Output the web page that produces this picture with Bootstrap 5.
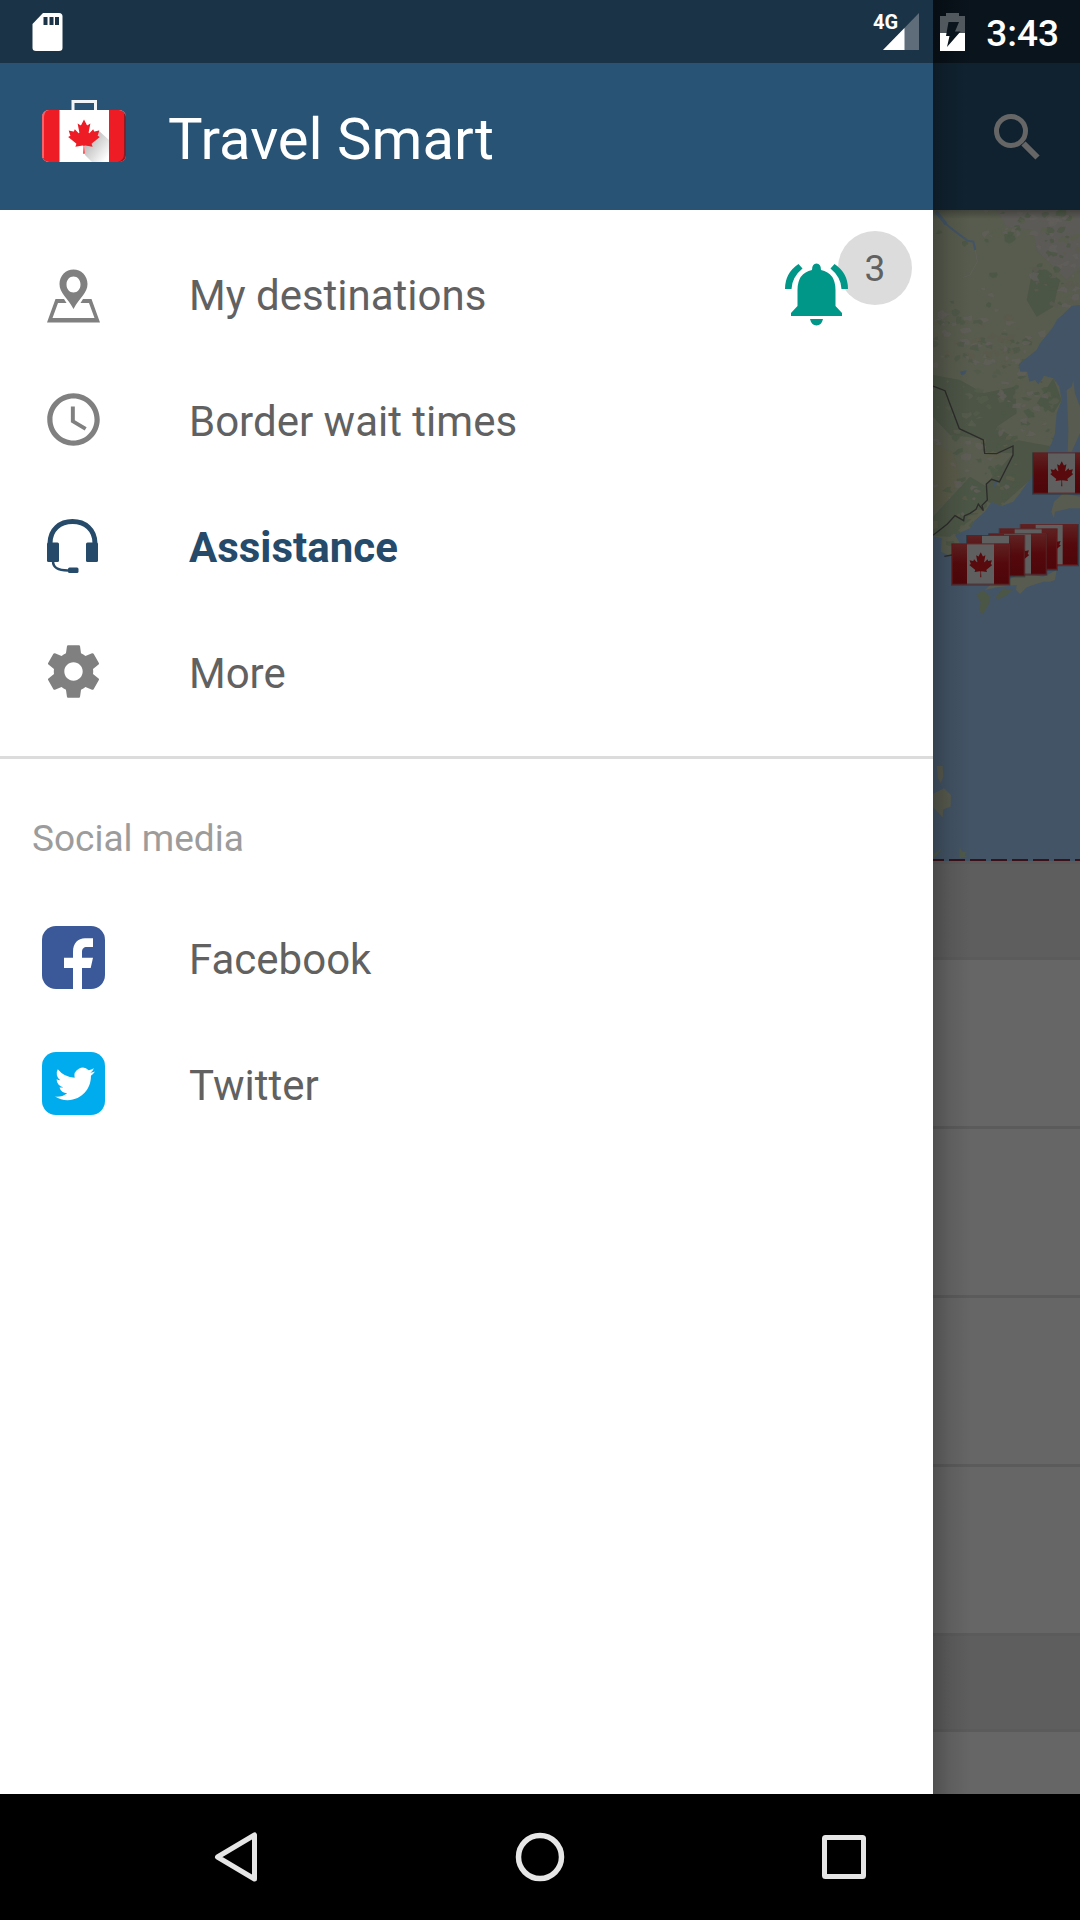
<!DOCTYPE html>
<html lang="en">
<head>
<meta charset="utf-8">
<meta name="viewport" content="width=device-width, initial-scale=1">
<title>Travel Smart</title>
<link href="https://cdn.jsdelivr.net/npm/bootstrap@5.3.0/dist/css/bootstrap.min.css" rel="stylesheet">
<style>
  :root { --peek: 147px; }
  body { font-family: Roboto, "Noto Sans", sans-serif; background: #666; }
  svg { display: block; flex: none; }
  .status-strip {
    height: 63px; padding: 0 21px 0 32px; color: #fff;
    background: linear-gradient(to right, #1a3346 calc(100% - var(--peek)), #070e14 calc(100% - var(--peek)), #0a141c calc(100% - 110px));
  }
  .status-set { gap: 21px; }
  .status-set svg { overflow: visible; }
  .net-type { font-size: 20px; font-weight: 700; }
  .clock-text { font-size: 37px; line-height: 44px; font-weight: 500; padding-top: 4px; }
  .app-top { height: 147px; background: #102230; padding-right: 39px; }
  .map-area { background: #435466; }
  .map-area::before { content: ""; position: absolute; top: 0; left: 0; right: 0; height: 9px; background: linear-gradient(rgba(0,0,0,.25), transparent); }
  .feed-head { height: 96px; background: #5e5e5e; border-bottom: 3px solid #5b5b5b; }
  .feed-head-first { height: 99px; border-top: 3px solid #5b5b5b; }
  .feed-item { height: 169px; background: #666; border-bottom: 3px solid #5b5b5b; }
  .feed-last { min-height: 62px; background: #666; }
  .drawer { width: calc(100% - var(--peek)); background: #fff; }
  .drawer::after { content: ""; position: absolute; top: 0; bottom: 0; left: 100%; width: 38px; background: linear-gradient(to right, rgba(0,0,0,.22), rgba(0,0,0,.08) 45%, transparent); pointer-events: none; }
  .drawer-top { height: 147px; background: #285375; padding: 0 42px; gap: 42px; }
  .drawer-top svg { margin-bottom: 11px; }
  .drawer-title { font-size: 58px; line-height: 68px; font-weight: 400; color: #fff; padding-top: 4px; }
  .drawer-menu { padding-top: 22px; padding-bottom: 20px; border-bottom: 3px solid #dcdcdc; }
  .drawer-row { height: 126px; padding: 0 21px 0 42px; gap: 84px; font-size: 42px; line-height: 50px; color: #616161; text-decoration: none; }
  .drawer-row > svg { margin-bottom: 4px; color: #808080; }
  .row-text { padding-top: 2px; }
  .drawer-row.chosen, .drawer-row.chosen > svg { color: #254a6a; }
  .drawer-row.chosen { font-weight: 700; }
  .alerts { height: 128px; }
  .alerts svg { position: relative; z-index: 1; margin-right: -11px; }
  .alert-count { width: 74px; height: 74px; background: #dcdcdc; font-size: 37px; line-height: 44px; padding-top: 2px; }
  .social-label { font-size: 37px; line-height: 48px; color: #9c9c9c; padding: 56px 32px 33px; font-weight: 400; }
  .nav-strip { height: 126px; background: #000; }
  .nav-key { width: 304px; height: 126px; background: none; border: 0; padding: 0; }
  .icon-key { background: none; border: 0; padding: 0; }
</style>
<script src="https://cdn.jsdelivr.net/npm/bootstrap@5.3.0/dist/js/bootstrap.bundle.min.js"></script>
</head>
<body class="d-flex flex-column min-vh-100">

<svg width="0" height="0" class="position-absolute" aria-hidden="true">
  <defs>
    <path id="leaf" d="m4890 4430-45-863a95 95 0 0 1 111-98l859 151-116-320a65 65 0 0 1 20-73l941-762-212-99a65 65 0 0 1-34-79l186-572-542 115a65 65 0 0 1-73-38l-105-247-423 454a65 65 0 0 1-111-57l204-1052-327 189a65 65 0 0 1-91-27l-332-652-332 652a65 65 0 0 1-91 27l-327-189 204 1052a65 65 0 0 1-111 57l-423-454-105 247a65 65 0 0 1-73 38l-542-115 186 572a65 65 0 0 1-34 79l-212 99 941 762a65 65 0 0 1 20 73l-116 320 859-151a95 95 0 0 1 111 98l-45 863z"/>
    <linearGradient id="flagRed" x1="0" y1="0" x2="0" y2="1"><stop offset="0" stop-color="#5f2222"/><stop offset=".5" stop-color="#54090c"/><stop offset="1" stop-color="#4e060a"/></linearGradient>
    <g id="flag">
      <rect x="-3" y="-1" width="178" height="127" fill="#222" opacity=".45"/>
      <rect width="172" height="122" fill="#5f5f5f"/>
      <rect width="45" height="122" fill="url(#flagRed)"/>
      <rect x="126" width="46" height="122" fill="url(#flagRed)"/>
      <rect x="1" y="1" width="170" height="120" fill="none" stroke="#651a1d" stroke-width="2"/>
      <use href="#leaf" fill="#580a0d" transform="translate(-3 18) scale(.0186)"/>
    </g>
  </defs>
</svg>

<header class="status-strip d-flex align-items-center">
  <svg width="32" height="40" viewBox="0 0 32 40" aria-label="SD card"><path fill="#fff" d="M11 1H27Q30.500 1 30.500 4.500V36Q30.500 39 27 39H4Q.5 39 .5 36V12Z"/><path fill="#1a3346" d="M11.500 5h4v8h-4zM17.500 5h4v8h-4zM23 5h4v8h-4z"/></svg>
  <div class="status-set d-flex align-items-center ms-auto">
    <svg width="46" height="38" viewBox="0 0 46 38" aria-label="4G signal"><path fill="#5f6d7b" d="M46 0V37H10Z"/><path fill="#fff" d="M31.500 15V37H10Z"/><text class="net-type" x="0" y="16" fill="#fff">4G</text></svg>
    <svg width="25" height="38" viewBox="0 0 25 38" aria-label="Battery charging"><path fill="#51585e" d="M6 0H19V3H25V20H0V3H6Z"/><path fill="#fff" d="M0 20H25V38H0Z"/><path fill="#0a141c" d="M8.500 9H19L15 18.500H20.500L7 34L9.500 23H6Z"/></svg>
    <span class="clock-text">3:43</span>
  </div>
</header>

<div class="position-relative flex-grow-1 d-flex flex-column">
  <main class="flex-grow-1 d-flex flex-column">
    <div class="app-top d-flex align-items-center justify-content-end">
      <button class="icon-key" type="button" aria-label="Search"><svg width="48" height="48" viewBox="0 0 48 48"><g fill="none" stroke="#666"><circle cx="18" cy="18" r="14.500" stroke-width="5"/><path stroke-width="6" d="M30.500 30.500L44.500 44.500"/></g></svg></button>
    </div>
    <div class="map-area position-relative d-flex justify-content-end">
      <svg width="147" height="651" viewBox="39 30 441 1953" aria-label="Map">
        <defs>
          <clipPath id="mainland"><path id="coast" d="M39 30H480V315L455 318L430 342L410 360L400 380L360 430L350 450L297 492L300 515L322 515L328 545L345 540L355 553L368 535L372 527L400 535L418 560L425 600L410 640L405 700L395 730L335 830L300 880L280 905L245 918L215 905L195 935L165 960L150 985L105 1005L120 1030L95 1070L63 1055L65 1015L39 1008Z"/></clipPath>
        </defs>
        <use href="#coast" fill="#575c4e"/>
        <g clip-path="url(#mainland)">
          <path fill="#5c5a56" d="M230 30H480V200L440 240L400 200L350 150L340 90L260 80Z"/>
          <path fill="#4c5546" d="M39 525L120 540L190 580L285 560L290 640L230 680L290 720L400 740L330 840L240 920L190 900L200 850L280 760L190 755L180 715L90 705L39 650Z"/>
          <path fill="#4c5646" d="M340 200L380 210L420 240L400 320L350 350L320 300ZM400 535L425 600L400 640L350 610Z"/>
          <path fill="#5a5b49" d="M39 730L100 760L120 830L90 900L39 930Z"/>
          <path fill="#4c5646" d="M39 950L150 830L200 860L200 920L90 1010L39 1008Z"/>
          <g id="terrain"></g>
          <path fill="none" stroke="#435466" stroke-width="10" d="M48 35L78 72"/>
          <path fill="none" stroke="#435466" stroke-width="6" d="M75 70L100 90L142 122L160 125L166 150"/>
          <path fill="none" stroke="#62605a" stroke-width="2" d="M166 150L172 185L150 225L128 233"/>
          <path fill="#435466" d="M120 515L140 510L136 522L124 526ZM218 850L232 845L226 865Z"/>
        </g>
        <g fill="#585b4f">
          <path d="M440 570L455 560L460 540L465 580L480 620V700L455 755L443 755L445 690Z"/>
          <path d="M402 905L430 880L480 890V925L450 925L405 935L402 955L394 935Z"/>
          <path d="M265 1140L300 1120L370 1130L410 1110L405 1140L390 1145L370 1145L320 1162L300 1182L288 1170L290 1155L230 1162L195 1170L210 1155Z"/>
          <path fill="#4c5646" d="M228 1190L250 1165L278 1170L262 1185L232 1200ZM168 1185L190 1170L212 1190L205 1215L190 1242L178 1235L182 1205Z"/>
          <path d="M50 1698L68 1697L70 1730L62 1750L54 1735ZM39 1782L72 1765L93 1785L92 1820L70 1828L68 1852L39 1822Z"/>
          <path fill="#4e5a4b" d="M39 1965L65 1945L60 1955L42 1974ZM118 1940L127 1955L140 1955L134 1965L141 1971L118 1975Z"/>
        </g>
        <path fill="none" stroke="#2c2c2b" stroke-width="4" d="M39 558L75 572L118 686L190 720L194 760L230 761L279 738V765L238 846L215 838L199 852L202 900L186 916L190 932L175 912L168 928L150 940L133 948L131 962L105 947L82 972L39 1006M73 1069L96 1065"/>
        <use href="#flag" x="339" y="758"/>
        <use href="#flag" x="302" y="973"/>
        <use href="#flag" x="239" y="986"/>
        <use href="#flag" x="207" y="1001"/>
        <use href="#flag" x="141" y="1006"/>
        <use href="#flag" x="96" y="1031"/>
        <path stroke="#3a1118" stroke-width="6" stroke-dasharray="48 15" d="M24 1980H480"/>
      </svg>
    </div>
    <div class="feed-head feed-head-first"></div>
    <div class="feed-item"></div>
    <div class="feed-item"></div>
    <div class="feed-item"></div>
    <div class="feed-item"></div>
    <div class="feed-head"></div>
    <div class="feed-last flex-grow-1"></div>
  </main>

  <aside class="drawer position-absolute top-0 bottom-0 start-0" aria-label="Navigation drawer">
    <div class="drawer-top d-flex align-items-center">
      <svg width="84" height="62" viewBox="0 0 84 62" aria-hidden="true">
        <defs><clipPath id="caseBody"><rect y="10" width="84" height="52" rx="7"/></clipPath>
        <linearGradient id="leafShade" x1="0" y1="0" x2="1" y2="1"><stop offset=".2" stop-color="#b8b8b8"/><stop offset=".9" stop-color="#fff"/></linearGradient></defs>
        <path fill="none" stroke="#f2f5f7" stroke-width="3" d="M31 11V1.500H53.500V11"/>
        <g clip-path="url(#caseBody)">
          <rect y="10" width="84" height="52" fill="#fff"/>
          <path fill="url(#leafShade)" d="M56 30L67 40V62H50L43 55V45L52 42Z"/>
          <path fill="#ee1c25" d="M0 10H17.500V62H0ZM67 10H84V62H67Z"/>
          <path fill="#8d1b23" d="M84 14V62H76Q82 60 82 54V14Z"/>
          <path fill="#f5646b" d="M0 10H5Q2 13 2 18V58H0Z"/>
        </g>
        <use href="#leaf" fill="#ee1c25" transform="translate(1.200 16) scale(.0085)"/>
      </svg>
      <h1 class="drawer-title mb-0">Travel Smart</h1>
    </div>

    <nav class="drawer-menu">
      <a href="#" class="drawer-row d-flex align-items-center">
        <svg width="63" height="63" viewBox="0 0 63 63" fill="currentColor" aria-hidden="true"><path fill-rule="evenodd" d="M31.500 7.500C39 7.500 45.500 13.500 45.500 22C45.500 31 38 35 31.500 47C25 35 17.500 31 17.500 22C17.500 13.500 24 7.500 31.500 7.500ZM31.500 14.500C27.500 14.500 24.500 18 24.500 22.500S27.500 30.500 31.500 30.500S38.500 27 38.500 22.500S35.500 14.500 31.500 14.500Z"/><path d="M13.500 37H22L24.500 41H16L10.500 56H52.500L47 41H38.500L41 37H49.500L58 60.500H5Z"/></svg>
        <span class="row-text">My destinations</span>
        <span class="alerts d-flex align-items-center ms-auto">
          <svg width="64" height="64" viewBox="0 0 64 64" fill="#009688" aria-hidden="true"><path d="M27 7Q27 .5 31.500 .5T36 7Q50.500 10 50.500 27V43L57 50V53H6V50L12.500 43V27Q12.500 10 27 7ZM25 56H38Q36.500 62.500 31.500 62.500T25 56ZM0 26Q0 10 13.500 1L17.500 5.500Q7 14 6.500 26ZM63 26Q63 10 49.500 1L45.500 5.500Q56 14 56.500 26Z"/></svg>
          <span class="alert-count rounded-circle d-flex align-items-center justify-content-center align-self-start">3</span>
        </span>
      </a>
      <a href="#" class="drawer-row d-flex align-items-center">
        <svg width="63" height="63" viewBox="0 0 24 24" fill="currentColor" aria-hidden="true"><path d="M11.990 2C6.470 2 2 6.480 2 12s4.470 10 9.990 10C17.520 22 22 17.520 22 12S17.520 2 11.990 2zM12 20c-4.420 0-8-3.580-8-8s3.580-8 8-8 8 3.580 8 8-3.580 8-8 8z"/><path d="M12.500 7H11v6l5.250 3.150.75-1.230-4.500-2.670z"/></svg>
        <span class="row-text">Border wait times</span>
      </a>
      <a href="#" class="drawer-row chosen d-flex align-items-center" aria-current="page">
        <svg width="63" height="63" viewBox="0 0 63 63" fill="currentColor" aria-hidden="true"><rect x="5" y="28.500" width="12" height="19.500" rx="1.500"/><rect x="44" y="28.500" width="12" height="19.500" rx="1.500"/><rect x="26" y="53.500" width="10.500" height="5.500" rx="1.500"/><path fill="none" stroke="currentColor" stroke-width="5" d="M8 29.500C8 15.500 18 7.500 30.500 7.500S53 15.500 53 29.500"/><path fill="none" stroke="currentColor" stroke-width="2.500" d="M11 47C11 54 16 56.500 26 56.500"/></svg>
        <span class="row-text">Assistance</span>
      </a>
      <a href="#" class="drawer-row d-flex align-items-center">
        <svg width="63" height="63" viewBox="0 0 24 24" fill="currentColor" aria-hidden="true"><path d="M19.430 12.980c.04-.32.07-.64.07-.98s-.03-.66-.07-.98l2.110-1.650c.19-.15.24-.42.12-.64l-2-3.460c-.12-.22-.39-.3-.61-.22l-2.490 1c-.52-.4-1.080-.73-1.690-.98l-.38-2.650C14.460 2.180 14.250 2 14 2h-4c-.25 0-.46.18-.49.42l-.38 2.650c-.61.25-1.170.59-1.690.98l-2.490-1c-.23-.09-.49 0-.61.22l-2 3.460c-.13.22-.07.49.12.64l2.110 1.650c-.04.32-.07.65-.07.98s.03.66.07.98l-2.110 1.650c-.19.15-.24.42-.12.64l2 3.460c.12.22.39.3.61.22l2.490-1c.52.4 1.080.73 1.690.98l.38 2.650c.03.24.24.42.49.42h4c.25 0 .46-.18.49-.42l.38-2.650c.61-.25 1.170-.59 1.690-.98l2.490 1c.23.09.49 0 .61-.22l2-3.460c.12-.22.07-.49-.12-.64l-2.110-1.650zM12 15.500c-1.930 0-3.500-1.570-3.500-3.500s1.570-3.500 3.500-3.500 3.500 1.570 3.500 3.500-1.570 3.500-3.500 3.500z"/></svg>
        <span class="row-text">More</span>
      </a>
    </nav>

    <h2 class="social-label mb-0">Social media</h2>
    <nav>
      <a href="#" class="drawer-row d-flex align-items-center">
        <svg width="63" height="63" viewBox="0 0 63 63" aria-hidden="true"><rect width="63" height="63" rx="14" fill="#3b5998"/><path fill="#fff" d="M31 63V42H22V31.700H31V26C31 17 36 12.300 43 12.300H51V21H45C41.500 21 40 23 40 26V31.700H51L48.700 42H40V63Z"/></svg>
        <span class="row-text">Facebook</span>
      </a>
      <a href="#" class="drawer-row d-flex align-items-center">
        <svg width="63" height="63" viewBox="0 0 63 63" aria-hidden="true"><rect width="63" height="63" rx="14" fill="#00aced"/><path fill="#fff" transform="translate(13 10.700) scale(2.500)" d="M5.026 15c6.038 0 9.341-5.003 9.341-9.334 0-.14 0-.282-.006-.422A6.685 6.685 0 0 0 16 3.542a6.658 6.658 0 0 1-1.889.518 3.301 3.301 0 0 0 1.447-1.817 6.533 6.533 0 0 1-2.087.793A3.286 3.286 0 0 0 7.875 6.030a9.325 9.325 0 0 1-6.767-3.429 3.289 3.289 0 0 0 1.018 4.382A3.323 3.323 0 0 1 .64 6.575v.045a3.288 3.288 0 0 0 2.632 3.218 3.203 3.203 0 0 1-.865.115 3.230 3.230 0 0 1-.614-.057 3.283 3.283 0 0 0 3.067 2.277A6.588 6.588 0 0 1 .78 13.580a6.320 6.320 0 0 1-.78-.045A9.344 9.344 0 0 0 5.026 15z"/></svg>
        <span class="row-text">Twitter</span>
      </a>
    </nav>
  </aside>
</div>

<footer class="nav-strip d-flex justify-content-center">
  <button class="nav-key d-flex align-items-center justify-content-center" type="button" aria-label="Back"><svg width="50" height="50" viewBox="0 0 50 50"><path fill="none" stroke="#e6e6e6" stroke-width="5" stroke-linejoin="round" d="M43.500 3V47L6.500 25Z"/></svg></button>
  <button class="nav-key d-flex align-items-center justify-content-center" type="button" aria-label="Home"><svg width="50" height="50" viewBox="0 0 50 50"><circle cx="25" cy="25" r="21.500" fill="none" stroke="#e6e6e6" stroke-width="5.500"/></svg></button>
  <button class="nav-key d-flex align-items-center justify-content-center" type="button" aria-label="Recent apps"><svg width="50" height="50" viewBox="0 0 50 50"><rect x="5.500" y="5.500" width="39" height="39" rx="1" fill="none" stroke="#e6e6e6" stroke-width="5"/></svg></button>
</footer>

<script>
  // Scatter forest and upland patches over the mainland from a fixed seed.
  let seed = 7;
  const rnd = () => (seed = (seed * 16807) % 2147483647) / 2147483647;
  const layer = document.getElementById('terrain');
  const zones = [
    [200, 30, 480, 130, 50, ['#4b5645', '#605e5a', '#585c4e']],
    [340, 120, 480, 320, 50, ['#4b5645', '#605e5b', '#5a5a50']],
    [39, 330, 300, 500, 80, ['#605e59', '#4e5747', '#5b5a4c']],
    [240, 400, 420, 720, 90, ['#605e59', '#4b5645', '#575c4e']],
    [39, 700, 300, 1040, 80, ['#605e59', '#4b5645', '#5a5b49']],
    [39, 80, 300, 330, 10, ['#605e59', '#4b5645']],
    [39, 510, 240, 700, 22, ['#575c4e', '#525a4a']]
  ];
  for (const [x0, y0, x1, y1, n, colors] of zones) {
    for (let i = 0; i < n; i++) {
      const cx = x0 + rnd() * (x1 - x0), cy = y0 + rnd() * (y1 - y0), r = 5 + rnd() * 15, pts = [];
      for (let k = 0; k < 7; k++) {
        const a = k / 7 * 6.283, q = r * (.3 + rnd() * .9);
        pts.push((cx + q * Math.cos(a)).toFixed(0) + ',' + (cy + q * .7 * Math.sin(a)).toFixed(0));
      }
      const p = document.createElementNS('http://www.w3.org/2000/svg', 'polygon');
      p.setAttribute('points', pts.join(' '));
      p.setAttribute('fill', colors[i % colors.length]);
      p.setAttribute('opacity', '.8');
      layer.appendChild(p);
    }
  }
</script>
</body>
</html>
